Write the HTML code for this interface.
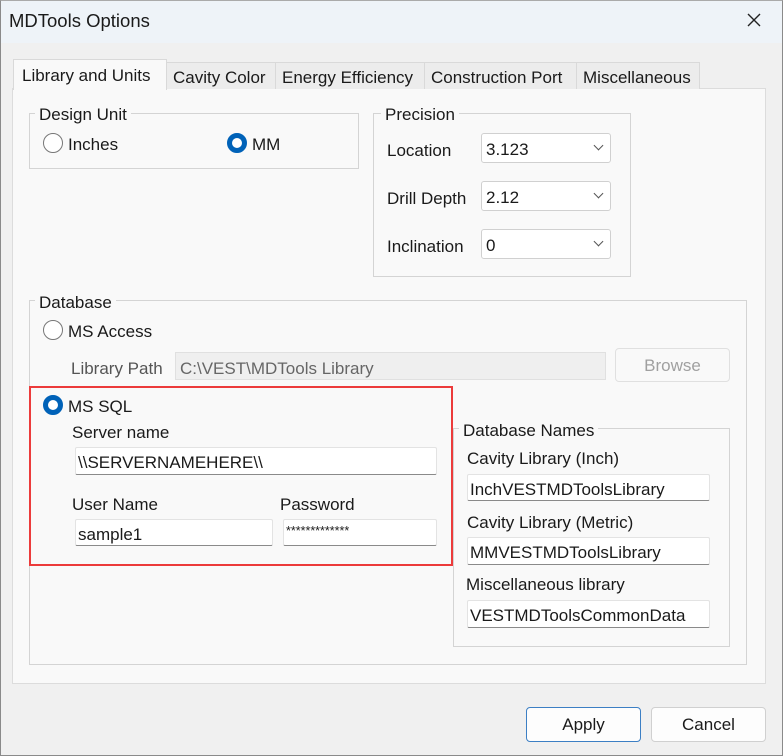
<!DOCTYPE html>
<html><head><style>
*{box-sizing:border-box;margin:0;padding:0}
body{width:783px;height:756px;background:#f0f0f0;font-family:"Liberation Sans",sans-serif;font-size:17px;color:#1a1a1a;position:relative;overflow:hidden}
.a{position:absolute;white-space:nowrap}
.win{position:absolute;left:0;top:0;width:783px;height:756px;border:1px solid #8a8a8a;border-top-color:#aaa}
.title{position:absolute;left:1px;top:1px;width:781px;height:42px;background:#eef3f8}
.tab{position:absolute;top:62px;height:27px;background:#ececec;border:1px solid #d9d9d9;border-bottom:none;font-size:17px;padding:5px 0 0 6px}
.panel{position:absolute;left:12px;top:88px;width:754px;height:596px;background:#f9f9f9;border:1px solid #dcdcdc}
.grp{position:absolute;border:1px solid #d4d4d4}
.lg{position:absolute;background:#f9f9f9;padding:0 4px;font-size:17px}
.radio{position:absolute;width:20px;height:20px;border-radius:50%;border:1.5px solid #777;background:#fff}
.radio.on{border:5.5px solid #0062b8;background:#fff}
.tb{position:absolute;background:#fff;border:1px solid #e3e3e3;border-bottom:1.5px solid #8a8a8a;padding:5px 0 0 2px;font-size:17px;border-radius:2px}
.cb{position:absolute;background:#fff;border:1px solid #d0d0d0;border-radius:3px;padding:6px 0 0 4px;font-size:17px}
.cb:after{content:"";position:absolute;right:8px;top:8px;width:6px;height:6px;border-right:1px solid #555;border-bottom:1px solid #555;transform:rotate(45deg)}
.btn{position:absolute;background:#fdfdfd;border:1px solid #d0d0d0;border-radius:4px;text-align:center;font-size:17px;padding-top:7px}
</style></head><body>
<div class="win"></div>
<div class="title"></div>
<div class="a" style="left:9px;top:10px;font-size:18.5px">MDTools Options</div>
<svg class="a" style="left:746px;top:12px" width="16" height="16"><path d="M2 2L14 14M14 2L2 14" stroke="#222" stroke-width="1.4"/></svg>
<div class="panel"></div>
<div class="tab" style="left:166px;width:110px">Cavity Color</div>
<div class="tab" style="left:275px;width:150px">Energy Efficiency</div>
<div class="tab" style="left:424px;width:153px">Construction Port</div>
<div class="tab" style="left:576px;width:124px">Miscellaneous</div>
<div class="tab" style="left:13px;top:59px;height:31px;width:154px;background:#f9f9f9;padding:6px 0 0 8px">Library and Units</div>

<div class="grp" style="left:29px;top:113px;width:330px;height:56px"></div>
<div class="lg" style="left:35px;top:105px">Design Unit</div>
<div class="radio" style="left:43px;top:133px"></div><div class="a" style="left:68px;top:135px">Inches</div>
<div class="radio on" style="left:227px;top:133px"></div><div class="a" style="left:252px;top:135px">MM</div>

<div class="grp" style="left:373px;top:113px;width:258px;height:164px"></div>
<div class="lg" style="left:381px;top:105px">Precision</div>
<div class="a" style="left:387px;top:141px">Location</div>
<div class="a" style="left:387px;top:189px">Drill Depth</div>
<div class="a" style="left:387px;top:237px">Inclination</div>
<div class="cb" style="left:481px;top:133px;width:130px;height:30px">3.123</div>
<div class="cb" style="left:481px;top:181px;width:130px;height:30px">2.12</div>
<div class="cb" style="left:481px;top:229px;width:130px;height:30px">0</div>

<div class="grp" style="left:29px;top:300px;width:718px;height:365px"></div>
<div class="lg" style="left:35px;top:293px">Database</div>
<div class="radio" style="left:43px;top:320px"></div><div class="a" style="left:68px;top:322px">MS Access</div>
<div class="a" style="left:71px;top:359px;color:#555">Library Path</div>
<div class="a" style="left:175px;top:352px;width:431px;height:28px;background:#efefef;border:1px solid #e0e0e0;padding:6px 0 0 4px;color:#666">C:\VEST\MDTools Library</div>
<div class="btn" style="left:615px;top:348px;width:115px;height:34px;color:#a0a0a0;background:#f9f9f9;border-color:#e0e0e0">Browse</div>

<div class="a" style="left:29px;top:386px;width:424px;height:180px;border:2.5px solid #ec3b3b"></div>
<div class="radio on" style="left:43px;top:395px"></div><div class="a" style="left:68px;top:397px">MS SQL</div>
<div class="a" style="left:72px;top:423px">Server name</div>
<div class="tb" style="left:75px;top:447px;width:362px;height:28px">\\SERVERNAMEHERE\\</div>
<div class="a" style="left:72px;top:495px">User Name</div>
<div class="a" style="left:280px;top:495px">Password</div>
<div class="tb" style="left:75px;top:519px;width:198px;height:27px">sample1</div>
<div class="tb" style="left:283px;top:519px;width:154px;height:27px;font-size:12.5px;padding-top:4px">*************</div>

<div class="grp" style="left:453px;top:428px;width:277px;height:219px"></div>
<div class="lg" style="left:459px;top:421px">Database Names</div>
<div class="a" style="left:467px;top:449px">Cavity Library (Inch)</div>
<div class="tb" style="left:467px;top:474px;width:243px;height:27px">InchVESTMDToolsLibrary</div>
<div class="a" style="left:467px;top:513px">Cavity Library (Metric)</div>
<div class="tb" style="left:467px;top:537px;width:243px;height:28px">MMVESTMDToolsLibrary</div>
<div class="a" style="left:466px;top:575px">Miscellaneous library</div>
<div class="tb" style="left:467px;top:600px;width:243px;height:28px">VESTMDToolsCommonData</div>

<div class="btn" style="left:526px;top:707px;width:115px;height:35px;border:1.5px solid #3c7fc4">Apply</div>
<div class="btn" style="left:651px;top:707px;width:115px;height:35px">Cancel</div>
</body></html>
